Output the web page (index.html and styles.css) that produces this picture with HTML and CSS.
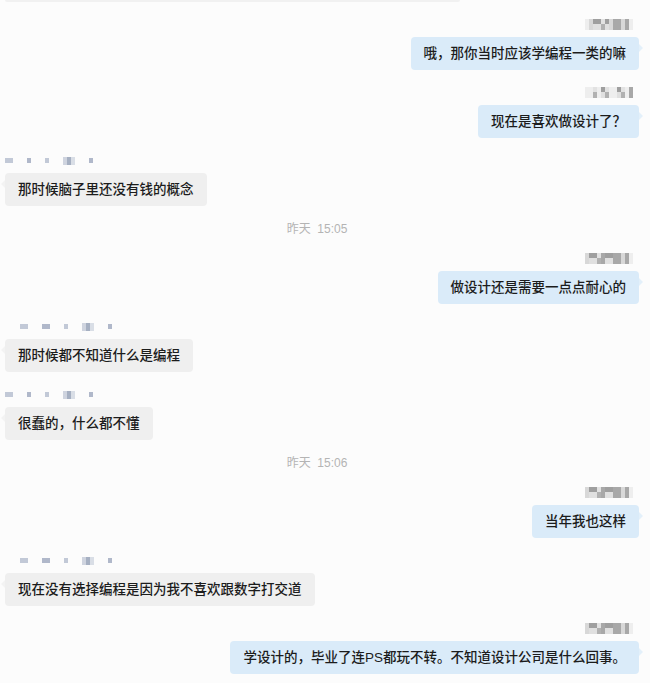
FILE: index.html
```html
<!DOCTYPE html>
<html lang="zh-CN">
<head>
    <meta charset="UTF-8">
    <meta name="viewport" content="width=device-width, initial-scale=1.0">
    <title>聊天记录</title>
    <link rel="stylesheet" href="styles.css">
</head>
<body>

    <div class="chat">

        <div class="cut"></div>

        <div class="msg right">
            <div class="nick nick-r"><span class="c-e"></span><span class="c-a"></span><span class="c-b"></span><span class="c-b"></span><span class="c-d"></span><span class="c-b"></span><span class="c-a"></span><span class="c-c"></span><span class="c-c"></span><span class="c-a"></span><span class="c-c"></span><span class="c-e"></span></div>
            <div class="bubble">哦，那你当时应该学编程一类的嘛</div>
        </div>

        <div class="msg right">
            <div class="nick nick-r"><span class="c-e"></span><span class="c-e"></span><span class="c-d"></span><span class="c-e"></span><span class="c-b"></span><span class="c-d"></span><span class="c-e"></span><span class="c-e"></span><span class="c-b"></span><span class="c-d"></span><span class="c-e"></span><span class="c-c"></span></div>
            <div class="bubble">现在是喜欢做设计了？</div>
        </div>

        <div class="msg left">
            <div class="nick nick-l"><span class="d-a w8"></span><span class="gap"></span><span class="d-b w4"></span><span class="gap"></span><span class="d-a w4"></span><span class="gap"></span><span class="d-c w10"></span><span class="gap"></span><span class="d-b w4"></span></div>
            <div class="bubble">那时候脑子里还没有钱的概念</div>
        </div>

        <div class="stamp">昨天&nbsp;&nbsp;15:05</div>

        <div class="msg right">
            <div class="nick nick-r"><span class="c-a"></span><span class="c-b"></span><span class="c-b"></span><span class="c-d"></span><span class="c-c"></span><span class="c-b"></span><span class="c-b"></span><span class="c-c"></span><span class="c-c"></span><span class="c-a"></span><span class="c-c"></span><span class="c-e"></span></div>
            <div class="bubble">做设计还是需要一点点耐心的</div>
        </div>

        <div class="msg left">
            <div class="nick nick-l"><span class="pad"></span><span class="d-a w8"></span><span class="gap"></span><span class="d-b w8"></span><span class="gap"></span><span class="d-a w4"></span><span class="gap"></span><span class="d-c w10"></span><span class="gap"></span><span class="d-b w4"></span></div>
            <div class="bubble">那时候都不知道什么是编程</div>
        </div>

        <div class="msg left">
            <div class="nick nick-l"><span class="d-a w8"></span><span class="gap"></span><span class="d-b w4"></span><span class="gap"></span><span class="d-a w4"></span><span class="gap"></span><span class="d-c w10"></span><span class="gap"></span><span class="d-b w4"></span></div>
            <div class="bubble">很蠢的，什么都不懂</div>
        </div>

        <div class="stamp">昨天&nbsp;&nbsp;15:06</div>

        <div class="msg right">
            <div class="nick nick-r"><span class="c-a"></span><span class="c-b"></span><span class="c-b"></span><span class="c-d"></span><span class="c-c"></span><span class="c-b"></span><span class="c-b"></span><span class="c-c"></span><span class="c-c"></span><span class="c-a"></span><span class="c-c"></span><span class="c-e"></span></div>
            <div class="bubble">当年我也这样</div>
        </div>

        <div class="msg left">
            <div class="nick nick-l"><span class="pad"></span><span class="d-a w8"></span><span class="gap"></span><span class="d-b w8"></span><span class="gap"></span><span class="d-a w4"></span><span class="gap"></span><span class="d-c w10"></span><span class="gap"></span><span class="d-b w4"></span></div>
            <div class="bubble">现在没有选择编程是因为我不喜欢跟数字打交道</div>
        </div>

        <div class="msg right">
            <div class="nick nick-r"><span class="c-a"></span><span class="c-b"></span><span class="c-b"></span><span class="c-d"></span><span class="c-c"></span><span class="c-b"></span><span class="c-b"></span><span class="c-c"></span><span class="c-c"></span><span class="c-a"></span><span class="c-c"></span><span class="c-e"></span></div>
            <div class="bubble">学设计的，毕业了连PS都玩不转。不知道设计公司是什么回事。</div>
        </div>

    </div>

</body>
</html>
```

FILE: styles.css
```css
body {
    margin: 0;
    background-color: #fcfcfc;
    font-family: "Liberation Sans", "Noto Sans CJK SC", sans-serif;
    color: #1c1c1c;
}

.chat {
    display: flex;
    flex-direction: column;
    gap: 17px;
    padding: 0 11px 0 5px;
}

/* bottom edge of the previous message, cut off by the window */
.cut {
    width: 455px;
    height: 2px;
    background-color: #f1f1f1;
    border-radius: 0 0 4px 4px;
}

.msg {
    display: flex;
    flex-direction: column;
}

.msg.left {
    align-items: flex-start;
}

.msg.right {
    align-items: flex-end;
}

.bubble {
    position: relative;
    font-size: 13.5px;
    font-weight: 500;
    line-height: 19px;
    padding: 7px 13px;
    border-radius: 4px;
    white-space: nowrap;
}

.left .bubble {
    background-color: #efefef;
}

.right .bubble {
    background-color: #daebf9;
}

.left .bubble::before {
    content: "";
    position: absolute;
    left: -4px;
    top: 7px;
    border-top: 4px solid transparent;
    border-bottom: 4px solid transparent;
    border-right: 4px solid #f3f3f3;
}

.right .bubble::after {
    content: "";
    position: absolute;
    right: -4px;
    top: 7px;
    border-top: 4px solid transparent;
    border-bottom: 4px solid transparent;
    border-left: 4px solid #e3f0fa;
}

/* blurred nick names */
.nick {
    display: flex;
    height: 11px;
    margin-bottom: 7px;
    opacity: 0.85;
}

.nick-r {
    margin-right: 6px;
}

.nick-r span {
    width: 4px;
    height: 11px;
}

.c-a { background-color: #d2d2d2; }
.c-b { background: linear-gradient(#8f8f8f 0 45%, #dcdcdc 45%); }
.c-c { background-color: #9a9a9a; }
.c-d { background: linear-gradient(#dedede 0 50%, #a4a4a4 50%); }
.c-e { background-color: #ececec; }

.nick-l {
    align-items: center;
    height: 11px;
    margin-left: 0;
}

.nick-l span {
    height: 5px;
}

.nick-l .gap { width: 14px; }
.nick-l .pad { width: 15px; }
.w4 { width: 4px; }
.w8 { width: 8px; }
.w10 { width: 12px; height: 8px !important; }

.d-a { background-color: #b9c1d1; }
.d-b { background-color: #a3adc2; }
.d-c { background: linear-gradient(90deg, #c8cedb 0 35%, #98a3b9 35% 70%, #d4d9e3 70%); }

.stamp {
    text-align: center;
    font-size: 12px;
    line-height: 13px;
    color: #b4b4b4;
    padding-right: 10px;
}
```
